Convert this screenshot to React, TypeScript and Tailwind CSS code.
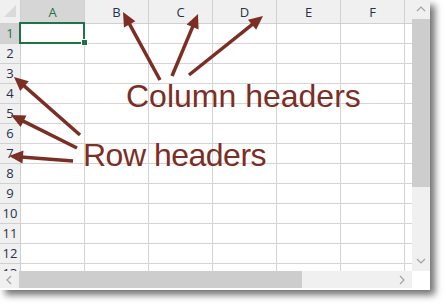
import React from "react"

const COLS = ["A", "B", "C", "D", "E", "F", "G"]
const ROWS = [1, 2, 3, 4, 5, 6, 7, 8, 9, 10, 11, 12, 13]

type Arrow = [number, number, number, number]

// tail x, tail y, tip x, tip y
const ARROWS: Arrow[] = [
  [160, 80, 123, 12],
  [172, 76, 198, 14],
  [189, 75, 263, 16],
  [80, 135, 14, 77],
  [77, 148, 11, 115],
  [73, 161, 9, 156],
]

function ArrowShape({ a }: { a: Arrow }) {
  const [x1, y1, x2, y2] = a
  const dx = x2 - x1
  const dy = y2 - y1
  const d = Math.hypot(dx, dy)
  const ux = dx / d
  const uy = dy / d
  const len = 14
  const half = 6.5
  const bx = x2 - ux * len
  const by = y2 - uy * len
  const px = -uy
  const py = ux
  return (
    <g>
      <line x1={x1} y1={y1} x2={bx + ux * 2} y2={by + uy * 2} stroke="#7d2e24" strokeWidth={3.5} />
      <polygon
        points={`${x2},${y2} ${bx + px * half},${by + py * half} ${bx - px * half},${by - py * half}`}
        fill="#7d2e24"
      />
    </g>
  )
}

function Chevron({ dir }: { dir: "up" | "down" | "left" | "right" }) {
  const d = {
    up: "M1 6 L5 2 L9 6",
    down: "M1 2 L5 6 L9 2",
    left: "M6 1 L2 5 L6 9",
    right: "M2 1 L6 5 L2 9",
  }[dir]
  return (
    <svg width="10" height="10" viewBox="0 0 10 10">
      <path d={d} fill="none" stroke="#a2a2a2" strokeWidth={1.2} />
    </svg>
  )
}

function HeaderRow() {
  return (
    <div className="flex h-[24px]">
      <div className="w-[21px] shrink-0 border-r border-b border-[#d0d0d0] bg-[#f0f0f0] relative">
        <svg className="absolute left-[4px] top-[5px]" width="13" height="13" viewBox="0 0 13 13">
          <polygon points="12,0 12,12 0,12" fill="#dadada" />
        </svg>
      </div>
      {COLS.map((c) => (
        <div
          key={c}
          className={
            c === "A"
              ? "w-[64px] shrink-0 border-r border-b border-[#d0d0d0] bg-[#d6d6d6] text-[#217346] flex items-center justify-center pt-[2px]"
              : "w-[64px] shrink-0 border-r border-b border-[#d0d0d0] bg-[#f0f0f0] text-[#27324a] flex items-center justify-center pt-[2px]"
          }
        >
          {c}
        </div>
      ))}
    </div>
  )
}

function Row({ n }: { n: number }) {
  return (
    <div className="flex h-[20px]">
      <div
        className={
          n === 1
            ? "w-[21px] shrink-0 border-r border-b border-[#d0d0d0] bg-[#d2d2d2] text-[#217346] flex items-center justify-center"
            : "w-[21px] shrink-0 border-r border-b border-[#d0d0d0] bg-[#f0f0f0] text-[#27324a] flex items-center justify-center"
        }
      >
        {n}
      </div>
      {COLS.map((c) => (
        <div key={c} className="w-[64px] shrink-0 border-r border-b border-[#d4d4d4] bg-white relative">
          {n === 1 && c === "A" && (
            <>
              <div className="absolute z-10 -left-[2px] -top-[2px] w-[66px] h-[22px] border-2 border-[#217346]" />
              <div className="absolute z-10 left-[60px] top-[15px] w-[7px] h-[7px] bg-[#217346] border border-white" />
            </>
          )}
        </div>
      ))}
    </div>
  )
}

export default function App() {
  return (
    <div className="w-[447px] h-[306px] bg-white relative overflow-hidden font-['Open_Sans','Segoe_UI',sans-serif] text-[13px]">
      <div className="w-[430px] h-[290px] bg-white shadow-[5px_5px_7px_rgba(0,0,0,0.55)] flex flex-col">
        <div className="flex h-[271px]">
          {/* sheet */}
          <div className="w-[412px] overflow-hidden">
            <HeaderRow />
            {ROWS.map((n) => (
              <Row key={n} n={n} />
            ))}
          </div>

          {/* vertical scrollbar */}
          <div className="w-[18px] bg-[#f0f0f0] flex flex-col">
            <div className="h-[19px] flex items-center justify-center">
              <Chevron dir="up" />
            </div>
            <div className="h-[168px] bg-[#cdcdcd]" />
            <div className="flex-1" />
            <div className="h-[18px] flex items-center justify-center">
              <Chevron dir="down" />
            </div>
          </div>
        </div>

        {/* horizontal scrollbar */}
        <div className="flex h-[17px]">
          <div className="w-[412px] bg-[#f0f0f0] flex">
            <div className="w-[19px] flex items-center justify-center">
              <Chevron dir="left" />
            </div>
            <div className="w-[283px] bg-[#cdcdcd]" />
            <div className="flex-1" />
            <div className="w-[18px] flex items-center justify-center">
              <Chevron dir="right" />
            </div>
          </div>
          <div className="w-[18px] bg-white" />
        </div>
      </div>

      {/* annotations */}
      <svg className="absolute inset-0 pointer-events-none" width="447" height="306">
        {ARROWS.map((a, i) => (
          <ArrowShape key={i} a={a} />
        ))}
      </svg>
      <div className="absolute left-[126px] top-[80px] text-[32px] leading-[32px] text-[#7d2e24] font-['Liberation_Sans',Arial,sans-serif] whitespace-nowrap">
        Column headers
      </div>
      <div className="absolute left-[83px] top-[139px] text-[32px] leading-[32px] text-[#7d2e24] font-['Liberation_Sans',Arial,sans-serif] whitespace-nowrap tracking-[-0.5px]">
        Row headers
      </div>
    </div>
  )
}
